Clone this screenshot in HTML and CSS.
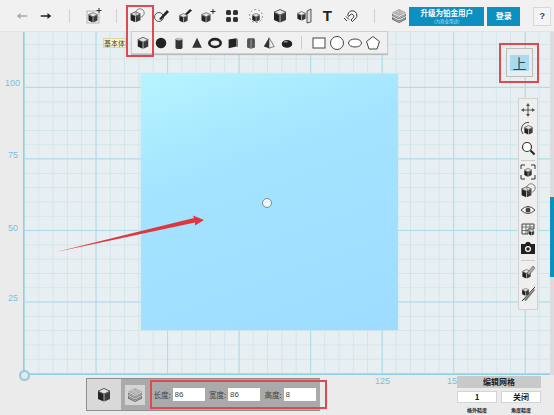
FILE: index.html
```html
<!DOCTYPE html>
<html lang="zh">
<head>
<meta charset="utf-8">
<title>编辑网格</title>
<link rel="stylesheet" href="styles.css">
</head>
<body>
<svg class="defs" width="0" height="0" aria-hidden="true">
  <defs>
    <symbol id="cube" viewBox="0 0 16 16">
      <path d="M8 1.500 14 4.200 8 7 2 4.200Z" fill="#e4e4e4" stroke="#333" stroke-width=".8"/>
      <path d="M2 4.600 7.600 7.200V14.600L2 12Z" fill="#222"/>
      <path d="M8.400 7.200 14 4.600V12L8.400 14.600Z" fill="#3c3c3c"/>
    </symbol>
    <symbol id="cube-sel" viewBox="0 0 16 16">
      <use href="#cube" x="0" y="2" width="13" height="14"/>
      <circle cx="11" cy="5" r="4.200" fill="none" stroke="#666" stroke-width=".8"/>
    </symbol>
    <symbol id="layers" viewBox="0 0 16 16">
      <path d="M8 1 15 4.500 8 8 1 4.500Z" fill="#a8a8a8"/>
      <path d="M1 5.500 8 9 15 5.500V8L8 11.500 1 8Z" fill="#808080"/>
      <path d="M1 9 8 12.500 15 9V11.500L8 15 1 11.500Z" fill="#666"/>
      <path d="M3 4.500 8 2.500M5 5.500 11 3M7 6.500 13 4M2 7 8 10.200 14 7M2 10.500 8 13.700 14 10.500" stroke="#e6e6e6" stroke-width=".5" fill="none"/>
    </symbol>
  </defs>
</svg>
<main class="app">
  <header class="topbar">
    <div class="history">
      <svg class="ic-sm" viewBox="0 0 16 16"><path d="M1 8 6 4V7H15V9H6V12Z" fill="#aaa"/></svg>
      <svg class="ic-sm" viewBox="0 0 16 16"><path d="M15 8 10 4V7H1V9H10V12Z" fill="#222"/></svg>
    </div>
    <span class="sep"></span>
    <svg class="ic" viewBox="0 0 16 16"><use href="#cube" x="1" y="3" width="12" height="13"/><rect x="1" y="3" width="12" height="12" fill="none" stroke="#999" stroke-width=".7"/><path d="M13 0V5M10.500 2.500H15.500" stroke="#333" stroke-width="1"/></svg>
    <span class="sep sep-b"></span>
    <div class="tools">
      <svg class="ic"><use href="#cube-sel"/></svg>
      <svg class="ic" viewBox="0 0 16 16"><circle cx="6" cy="9" r="4.500" fill="none" stroke="#555"/><path d="M6 11 14 2 16 4 8 12Z" fill="#222"/></svg>
      <svg class="ic" viewBox="0 0 16 16"><use href="#cube" x="1" y="4" width="11" height="12"/><path d="M8 6 13 1 15 2.500 10 7Z" fill="#222"/></svg>
      <svg class="ic" viewBox="0 0 16 16"><use href="#cube" x="0" y="3" width="12" height="13"/><path d="M13 1V6M10.500 3.500H15.500" stroke="#333"/></svg>
      <svg class="ic" viewBox="0 0 16 16"><g fill="#333"><rect x="2" y="2" width="5" height="5" rx="1.500"/><rect x="9" y="2" width="5" height="5" rx="1.500"/><rect x="2" y="9" width="5" height="5" rx="1.500"/><rect x="9" y="9" width="5" height="5" rx="1.500"/></g></svg>
      <svg class="ic" viewBox="0 0 16 16"><use href="#cube" x="3" y="4" width="10" height="11"/><circle cx="8" cy="8" r="6.500" fill="none" stroke="#777" stroke-width=".8" stroke-dasharray="2 2"/></svg>
      <svg class="ic"><use href="#cube"/></svg>
      <svg class="ic" viewBox="0 0 16 16"><use href="#cube" x="0" y="1" width="11" height="14"/><path d="M11 3 15 1V14L11 15Z" fill="#ddd" stroke="#333" stroke-width=".8"/></svg>
      <span class="glyph-t">T</span>
      <svg class="ic" viewBox="0 0 16 16"><path d="M5 8A4.500 4.500 0 1 1 12 11L9.500 13.500 8 12 10.500 9.500A2 2 0 1 0 7 7L5.500 8.500Z" fill="#fff" stroke="#333"/><path d="M1 10 4 13M3 8.500 6 11.500" stroke="#333"/></svg>
    </div>
    <span class="sep sep-c"></span>
    <svg class="ic"><use href="#layers"/></svg>
    <button class="cta cta-wide"><b>升级为铂金用户</b><small>(为商业用途)</small></button>
    <button class="cta cta-login"><b>登录</b></button>
    <button class="help">?</button>
  </header>

  <section class="stage">
    <div class="grid">
      <div class="plate"></div>
    </div>
    <span class="edge"></span>
  </section>

  <footer class="footer">
    <div class="bar">
      <div class="bar-shape"><svg class="ic"><use href="#cube"/></svg></div>
      <div class="bar-props">
        <span class="layer-btn"><svg class="ic"><use href="#layers"/></svg></span>
        <label class="prop prop-first">长度:<input value="86"></label>
        <label class="prop">宽度:<input value="86"></label>
        <label class="prop">高度:<input value="8"></label>
      </div>
    </div>
    <aside class="grid-panel">
      <h2>编辑网格</h2>
      <div class="grid-values"><span>1</span><span>关闭</span></div>
      <div class="grid-caps"><small>格外精度</small><small>角度精度</small></div>
    </aside>
  </footer>

  <span class="axis a100">100</span>
  <span class="axis a75">75</span>
  <span class="axis a50">50</span>
  <span class="axis a25">25</span>
  <span class="axis a125">125</span>
  <span class="axis a150">150</span>
  <span class="origin"></span>
  <span class="handle"></span>

  <svg class="arrow" viewBox="0 0 554 415"><path d="M56 252 194 218 193 215.500 204 220 195 225.500 195 222.500Z" fill="#e2343c"/></svg>

  <span class="tip">基本体</span>

  <nav class="subtools">
    <svg class="ic-md"><use href="#cube"/></svg>
    <svg class="ic-md" viewBox="0 0 16 16"><circle cx="8" cy="8" r="6" fill="#222"/></svg>
    <svg class="ic-md" viewBox="0 0 16 16"><path d="M4 3.500V13A4 1.800 0 0 0 12 13V3.500Z" fill="#333"/><ellipse cx="8" cy="3.500" rx="4" ry="1.500" fill="#bbb"/></svg>
    <svg class="ic-md" viewBox="0 0 16 16"><path d="M8 2 13.500 13.500H2.500Z" fill="#333"/></svg>
    <svg class="ic-md" viewBox="0 0 16 16"><ellipse cx="8" cy="8" rx="6.500" ry="4.500" fill="none" stroke="#222" stroke-width="3"/></svg>
    <svg class="ic-md" viewBox="0 0 16 16"><path d="M3 4 12 2.500V12L3 14Z" fill="#222"/><path d="M12 2.500 13.500 4V12.500L12 12Z" fill="#666"/></svg>
    <svg class="ic-md" viewBox="0 0 16 16"><path d="M4.500 2.500H11.500L12.500 4V13L8 14.500 3.500 13V4Z" fill="#555"/><path d="M8 4V14.500" stroke="#aaa"/></svg>
    <svg class="ic-md" viewBox="0 0 16 16"><path d="M8 2 14 12 8 14Z" fill="#eee" stroke="#333" stroke-width=".7"/><path d="M8 2 2 12 8 14Z" fill="#333"/></svg>
    <svg class="ic-md" viewBox="0 0 16 16"><ellipse cx="8" cy="9" rx="6" ry="4.500" fill="#222"/><ellipse cx="6.500" cy="6.500" rx="2.500" ry="1" fill="#888"/></svg>
    <span class="sub-sep"></span>
    <svg class="ic line" viewBox="0 0 16 16"><rect x="2" y="3" width="12" height="10"/></svg>
    <svg class="ic line" viewBox="0 0 16 16"><circle cx="8" cy="8" r="6.500"/></svg>
    <svg class="ic line" viewBox="0 0 16 16"><ellipse cx="8" cy="8" rx="6.500" ry="4"/></svg>
    <svg class="ic line" viewBox="0 0 16 16"><path d="M8 1.500 14.500 6.500 12 14H4L1.500 6.500Z"/></svg>
  </nav>

  <div class="viewcube"><span>上</span></div>

  <nav class="sidetools">
    <svg class="ic" viewBox="0 0 16 16"><path d="M8 1 10 4H8.500V7.500H12V6L15 8 12 10V8.500H8.500V12H10L8 15 6 12H7.500V8.500H4V10L1 8 4 6V7.500H7.500V4H6Z" fill="#555"/></svg>
    <svg class="ic" viewBox="0 0 16 16"><use href="#cube" x="3" y="3" width="11" height="12"/><path d="M3 13A7 7 0 0 1 9 1.500" fill="none" stroke="#444"/></svg>
    <svg class="ic" viewBox="0 0 16 16"><circle cx="7" cy="7" r="4.500" fill="#fff" stroke="#333" stroke-width="1.200"/><path d="M10.500 10.500 14.500 14.500" stroke="#222" stroke-width="2"/></svg>
    <span class="side-sep"></span>
    <svg class="ic" viewBox="0 0 16 16"><use href="#cube" x="3" y="3" width="10" height="11"/><path d="M1 5V1H5M11 1H15V5M15 11V15H11M5 15H1V11" fill="none" stroke="#333"/></svg>
    <svg class="ic"><use href="#cube-sel"/></svg>
    <svg class="ic" viewBox="0 0 16 16"><path d="M1 8Q8 1 15 8 8 15 1 8Z" fill="#fff" stroke="#444"/><circle cx="8" cy="8" r="2.500" fill="#444"/></svg>
    <svg class="ic" viewBox="0 0 16 16"><path d="M2 3H14V8H8V13H2Z" fill="none" stroke="#444"/><path d="M2 6H14M2 9.500H8M6 3V13M10 3V8" stroke="#444" stroke-width=".7"/><use href="#cube" x="8" y="8" width="7" height="7"/></svg>
    <svg class="ic" viewBox="0 0 16 16"><path d="M1 4H5L6.500 2H9.500L11 4H15V14H1Z" fill="#222"/><circle cx="8" cy="9" r="3" fill="#fff"/><circle cx="8" cy="9" r="1.800" fill="#222"/></svg>
    <span class="side-sep"></span>
    <svg class="ic" viewBox="0 0 16 16"><use href="#cube" x="1" y="4" width="11" height="12"/><path d="M7 9 13 2 15 4 9 11Z" fill="#aaa" stroke="#555" stroke-width=".6"/></svg>
    <svg class="ic side-last" viewBox="0 0 16 16"><use href="#cube" x="1" y="1" width="9" height="10"/><path d="M4 14 14 3 15 4 6 15Z" fill="#777"/><path d="M2 15 15 1" stroke="#333"/></svg>
  </nav>

  <span class="mark mark-tool"></span>
  <span class="mark mark-view"></span>
  <span class="mark mark-props"></span>
  <span class="side-tab"></span>
</main>
</body>
</html>
```
FILE: styles.css
```css
* { box-sizing: border-box; }
html, body { margin: 0; padding: 0; }
body { font-family: "Liberation Sans", "Noto Sans CJK SC", sans-serif; background: #ebebeb; }
.defs { position: absolute; }
.app {
  position: relative;
  display: grid;
  grid-template-rows: 32px 343px 40px;
  width: 554px;
  height: 415px;
  overflow: hidden;
  background: #ebebeb;
}
.ic { width: 16px; height: 16px; flex: none; display: block; }
.ic-md { width: 14px; height: 14px; flex: none; display: block; }
.ic-sm { width: 12px; height: 12px; flex: none; display: block; }

/* top toolbar */
.topbar {
  display: flex;
  align-items: center;
  padding: 1px 3px 0 16px;
  background: #f1f1f1;
  border-bottom: 1px solid #e2e2e2;
}
.history { display: flex; gap: 12px; }
.sep { width: 1px; height: 14px; background: #d0d0d0; margin-left: 17px; margin-right: 16px; flex: none; }
.sep-b { margin-left: 14px; margin-right: 12px; }
.sep-c { margin-left: 15px; margin-right: 16px; }
.tools { display: flex; align-items: center; gap: 7.800px; }
.glyph-t { width: 16px; text-align: center; font: 700 15px/16px "Liberation Sans", sans-serif; color: #222; }
.cta {
  border: 0;
  padding: 0;
  height: 19px;
  background: #0d8fbf;
  color: #fff;
  font-family: "Noto Sans CJK SC", sans-serif;
  display: flex;
  flex-direction: column;
  align-items: center;
  justify-content: center;
  flex: none;
}
.cta b { font-size: 7.500px; line-height: 10px; font-weight: 700; }
.cta small { font-size: 4.500px; line-height: 6px; color: #bfe3f0; }
.cta-wide { width: 75px; margin-left: 2px; }
.cta-login { width: 33px; margin-left: 3px; }
.cta-login b { font-size: 8px; }
.help {
  width: 18px;
  height: 19px;
  margin-left: 13px;
  padding: 0;
  border: 1px solid #d8d8d8;
  background: #f4f4f4;
  color: #444;
  font: 700 9px "Liberation Sans", sans-serif;
}

/* canvas */
.stage { position: relative; display: flex; padding-left: 23px; }
.grid {
  position: relative;
  flex: none;
  width: 527px;
  height: 343px;
  background-color: #e8eff2;
  border-left: 1px solid #8fd0e2;
  border-bottom: 1px solid #8fd0e2;
  background-image:
    linear-gradient(to right, #acdbe7 1px, transparent 1px),
    linear-gradient(to top, #acdbe7 1px, transparent 1px),
    linear-gradient(to right, #d3e5ea 1px, transparent 1px),
    linear-gradient(to top, #d3e5ea 1px, transparent 1px);
  background-size: 71.550px 71.550px, 71.550px 71.550px, 14.310px 14.310px, 14.310px 14.310px;
  background-position: left bottom;
}
.plate {
  position: absolute;
  left: 117px;
  top: 42px;
  width: 257px;
  height: 256px;
  background: linear-gradient(160deg, #b6f5ff 0%, #a4e4ff 35%, #9edcff 100%);
  box-shadow: 0 0 2px #c2e6f2;
}
.edge { width: 4px; background: #dcdcdc; }

/* bottom */
.footer { display: flex; align-items: flex-start; padding-left: 86px; }
.bar { display: flex; width: 234px; height: 33px; margin-top: 3px; border: 1px solid #8e8e8e; border-right: 0; background: #aaa; }
.bar-shape { width: 35px; display: flex; align-items: center; justify-content: center; background: #d9d9d9; }
.bar-props { flex: 1; display: flex; align-items: center; padding-left: 4px; }
.layer-btn { width: 20px; height: 20px; display: flex; align-items: center; justify-content: center; background: #d4d4d4; flex: none; }
.prop {
  display: flex;
  align-items: center;
  gap: 1px;
  width: 55.500px;
  flex: none;
  font-family: "Noto Sans CJK SC", sans-serif;
  font-size: 7.500px;
  color: #444;
  white-space: nowrap;
}
.prop-first { margin-left: 9px; }
.prop input {
  width: 32px;
  height: 13px;
  padding: 0 0 0 2px;
  border: 0;
  margin-left: 1px;
  background: #fff;
  color: #444;
  font: 8px "Liberation Sans", sans-serif;
  flex: none;
}
.grid-panel { position: relative; z-index: 1; width: 84px; margin-left: 137px; margin-top: 1px; }
.grid-panel h2 {
  margin: 0;
  height: 12px;
  background: #c9c9c9;
  color: #222;
  text-align: center;
  font: 700 8px/12px "Noto Sans CJK SC", sans-serif;
}
.grid-values { display: flex; justify-content: space-between; margin-top: 3px; }
.grid-values span {
  width: 40px;
  height: 12px;
  background: #fff;
  border: 1px solid #d4d4d4;
  color: #222;
  text-align: center;
  font: 700 8px/10px "Noto Sans CJK SC", sans-serif;
}
.grid-caps { display: flex; justify-content: space-between; margin-top: 3px; }
.grid-caps small { width: 40px; text-align: center; font: 700 5px/7px "Noto Sans CJK SC", sans-serif; color: #222; }

/* canvas annotations */
.axis { position: absolute; font-size: 9px; line-height: 10px; color: #7dbfda; }
.a100 { left: 5px; top: 78px; }
.a75 { left: 8px; top: 150px; }
.a50 { left: 8px; top: 223px; }
.a25 { left: 8px; top: 293px; }
.a125 { left: 375px; top: 376px; }
.a150 { left: 447px; top: 376px; }
.origin { position: absolute; left: 19px; top: 370px; width: 11px; height: 11px; border-radius: 50%; border: 2px solid #9cc6d8; background: #dfe9ee; }
.handle { position: absolute; left: 262px; top: 198px; width: 10px; height: 10px; border-radius: 50%; background: #eef6f8; border: 1px solid #6f8d9c; }
.arrow { position: absolute; left: 0; top: 0; width: 554px; height: 415px; pointer-events: none; }
.tip {
  position: absolute;
  left: 103px;
  top: 38px;
  width: 23px;
  height: 10px;
  background: #fbf7c8;
  border: 1px solid #dcd8a4;
  color: #444;
  text-align: center;
  font: 7px/8px "Noto Sans CJK SC", sans-serif;
}
.subtools {
  position: absolute;
  left: 131px;
  top: 31px;
  width: 257px;
  height: 23px;
  display: flex;
  align-items: center;
  gap: 4px;
  padding-left: 3.500px;
  background: #f0f0f0;
  border: 1px solid #cfcfcf;
  box-shadow: 0 1px 1px #bbb;
}
.subtools .ic { margin-left: -2px; margin-right: 0; }
.line { fill: #fff; stroke: #444; stroke-width: 1; }
.sub-sep { width: 1px; height: 13px; background: #ccc; margin: 0 7px 0 3px; flex: none; }
.viewcube {
  position: absolute;
  left: 506px;
  top: 48px;
  width: 27px;
  height: 29px;
  padding: 6px 3px;
  background: #e9edef;
  border: 1px solid #bdbdbd;
}
.viewcube span {
  display: block;
  height: 16px;
  background: #a7dcee;
  color: #2b4a55;
  text-align: center;
  font: 14px/16px "Noto Sans CJK SC", sans-serif;
}
.sidetools {
  position: absolute;
  left: 518px;
  top: 98px;
  width: 20px;
  height: 212px;
  display: flex;
  flex-direction: column;
  align-items: center;
  gap: 3px;
  padding-top: 3px;
  background: #efefef;
  border: 1px solid #d2d2d2;
}
.side-sep { width: 14px; height: 1px; background: #ccc; flex: none; margin: .5px 0; }
.side-last { margin-top: 3px; }
.mark { position: absolute; border: 2px solid #dc4b52; }
.mark-tool { left: 126px; top: 5px; width: 28px; height: 52px; }
.mark-view { left: 499px; top: 43px; width: 40px; height: 40px; }
.mark-props { left: 150px; top: 380px; width: 177px; height: 29px; }
.side-tab { position: absolute; left: 550px; top: 197px; width: 4px; height: 80px; background: #0d8fbf; }
```
